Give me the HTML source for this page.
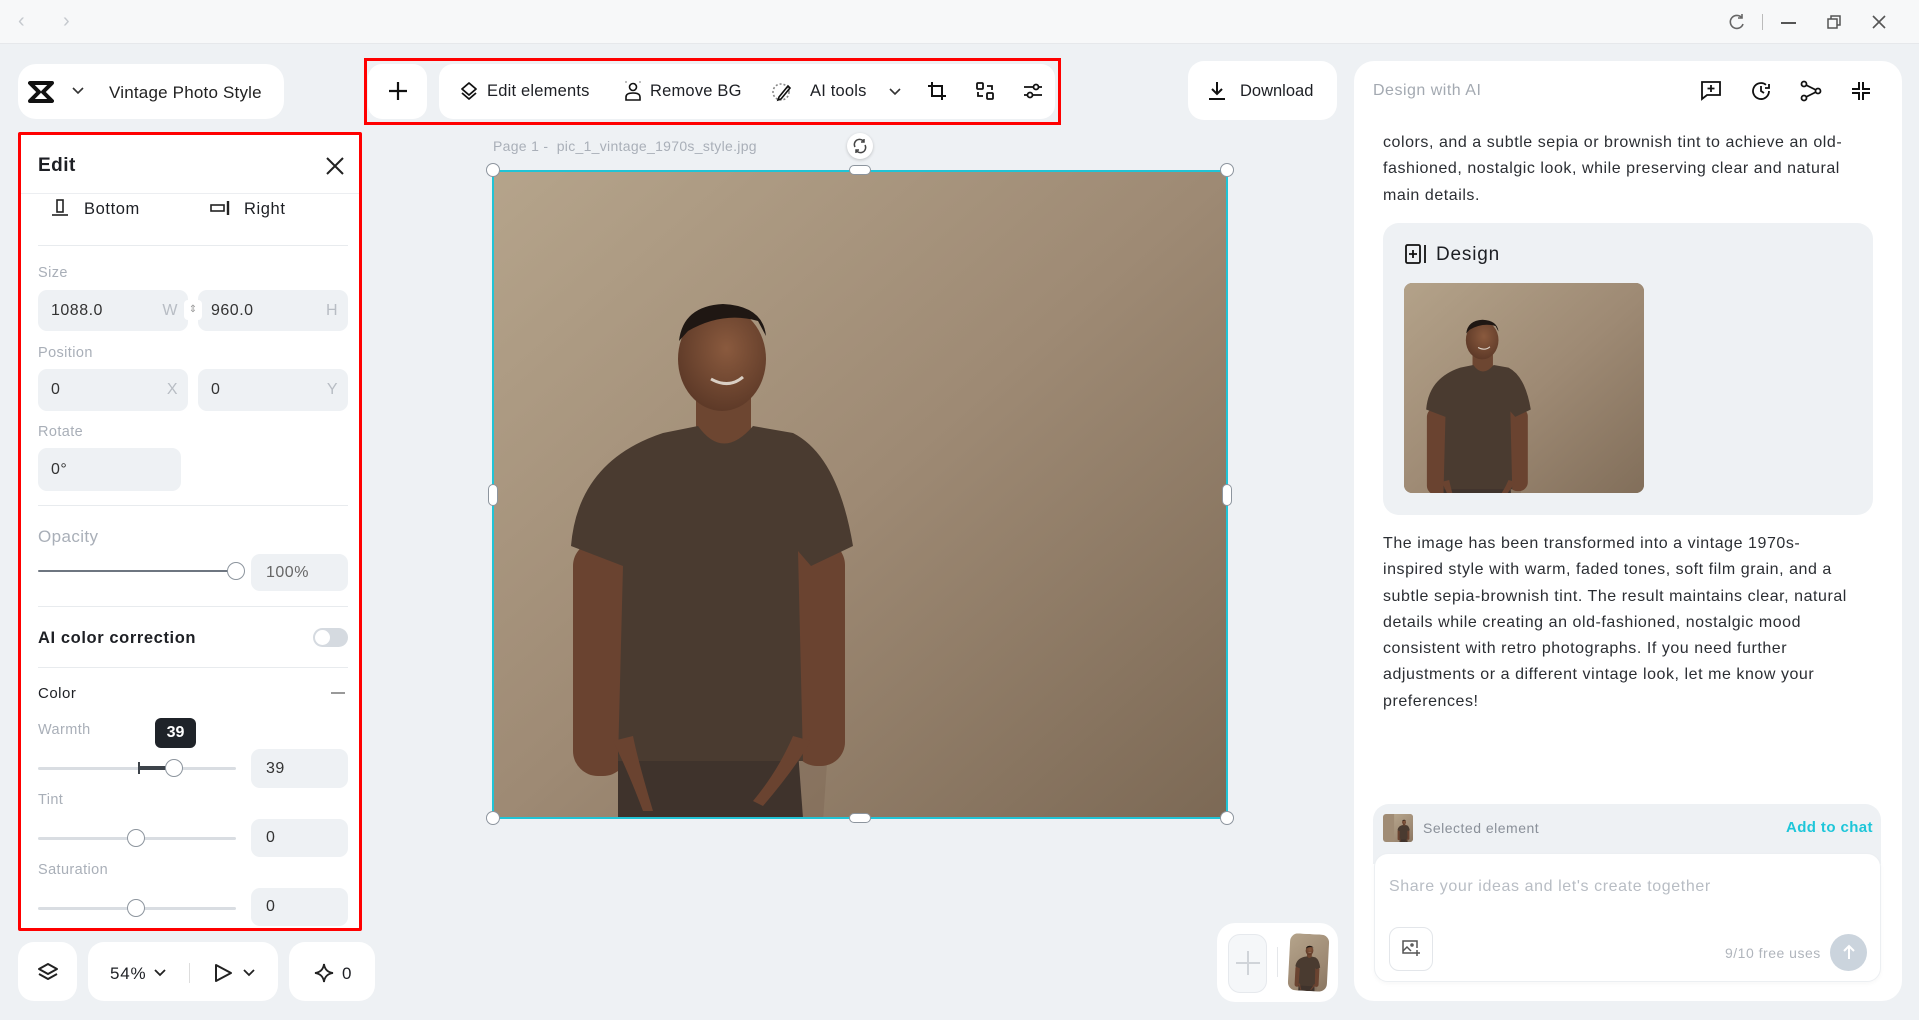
<!DOCTYPE html>
<html><head><meta charset="utf-8"><style>
*{box-sizing:border-box;margin:0;padding:0}
body{width:1919px;height:1020px;overflow:hidden;background:#eef1f4;font-family:"Liberation Sans",sans-serif;color:#1d1f24;position:relative}
.a{position:absolute}
.w{background:#fff;border-radius:18px}
.lbl{position:absolute;left:38px;font-size:14.5px;color:#a9afb8;letter-spacing:.4px}
.inp{position:absolute;background:#eef1f4;border-radius:9px;font-size:16px;color:#333;padding-left:13px;display:flex;align-items:center;letter-spacing:.5px}
.inp span{position:absolute;right:10px;color:#b8bdc4}
.div{position:absolute;left:38px;width:310px;height:1px;background:#e8ebee}
.track{position:absolute;height:3px;background:#d9dde2;border-radius:2px}
.knob{position:absolute;width:18px;height:18px;border-radius:50%;background:#fff;border:1.5px solid #8d959e}
.tb{position:absolute;top:82px;font-size:16.5px;color:#1d1f24;letter-spacing:.2px}
.p{position:absolute;left:1383px;font-size:16px;color:#2b2e33;letter-spacing:.55px;line-height:26.3px;width:500px}
.h{position:absolute;width:14px;height:14px;border-radius:50%;background:#fff;border:1.5px solid #8d959e}
.t2{margin-top:2px}
</style></head><body>
<svg width="0" height="0" style="position:absolute"><defs>
<linearGradient id="bg" x1="0" y1="0" x2="1" y2="1"><stop offset="0" stop-color="#b5a48b"/><stop offset=".5" stop-color="#9e8a74"/><stop offset="1" stop-color="#7c6955"/></linearGradient>
<radialGradient id="face" cx=".55" cy=".4" r=".6"><stop offset="0" stop-color="#8a5a3e"/><stop offset="1" stop-color="#5e3a28"/></radialGradient>
<symbol id="photo" viewBox="0 0 733 647">
<rect width="733" height="647" fill="url(#bg)"/>
<path d="M240 270 Q300 300 350 360 L330 650 L230 650Z" fill="#7a6552" opacity=".4"/>
<rect x="80" y="370" width="55" height="235" rx="25" fill="#6a4330"/>
<rect x="300" y="370" width="52" height="225" rx="24" fill="#6a4330"/>
<path d="M125 580 L305 580 L310 647 L125 647Z" fill="#3f332c"/>
<rect x="203" y="220" width="55" height="70" fill="#6d4631"/>
<ellipse cx="229" cy="188" rx="44" ry="52" fill="url(#face)"/>
<path d="M186 170 Q190 135 230 133 Q270 135 273 165 L265 150 Q230 140 195 160Z" fill="#1f1713"/>
<path d="M218 208 Q236 218 250 206" stroke="#d9cfc4" stroke-width="3" fill="none"/>
<path d="M170 262 L205 255 Q230 290 260 255 L300 262 Q345 285 360 375 L318 395 L305 380 L310 590 L125 590 L130 395 L78 375 Q85 290 170 262Z" fill="#4a3b30"/>
<path d="M120 570 Q135 600 150 640 L160 640 Q145 590 140 565Z" fill="#6a4330"/>
<path d="M300 565 Q285 600 260 630 L270 635 Q300 600 318 570Z" fill="#6a4330"/>
</symbol></defs></svg>

<!-- top bar -->
<div class="a" style="left:0;top:0;width:1919px;height:44px;background:#f7f8f9;border-bottom:1px solid #e6e8eb"></div>
<div class="a" style="left:18px;top:10px;font-size:20px;color:#c5c9ce">&#8249;</div>
<div class="a" style="left:63px;top:10px;font-size:20px;color:#c5c9ce">&#8250;</div>
<svg class="a" style="left:1728px;top:13px" width="18" height="18" viewBox="0 0 18 18" fill="none" stroke="#666" stroke-width="1.6"><path d="M14 5A6.5 6.5 0 1 0 15 11"/><path d="M14 1v4h-4"/></svg>
<div class="a" style="left:1762px;top:14px;width:1px;height:16px;background:#bbb"></div>
<div class="a" style="left:1781px;top:22px;width:15px;height:1.6px;background:#555"></div>
<svg class="a" style="left:1826px;top:14px" width="16" height="16" viewBox="0 0 16 16" fill="none" stroke="#555" stroke-width="1.5"><rect x="2" y="5" width="9" height="9"/><path d="M5 5V2h9v9h-3"/></svg>
<svg class="a" style="left:1872px;top:15px" width="14" height="14" viewBox="0 0 14 14" stroke="#555" stroke-width="1.6"><path d="M1 1l12 12M13 1L1 13"/></svg>

<!-- logo box -->
<div class="a w" style="left:18px;top:64px;width:266px;height:55px"></div>
<svg class="a" style="left:28px;top:81px" width="26" height="22" viewBox="0 0 26 22"><path d="M2 2h22L15 11l9 9H2l9-9z" fill="none" stroke="#111" stroke-width="4" stroke-linejoin="round"/></svg>
<svg class="a" style="left:72px;top:87px" width="12" height="8" viewBox="0 0 12 8" fill="none" stroke="#333" stroke-width="1.6"><path d="M1 1l5 5 5-5"/></svg>
<div class="a" style="left:109px;top:83px;font-size:17px;color:#222;letter-spacing:.2px">Vintage Photo Style</div>

<!-- edit panel -->
<div class="a" style="left:18px;top:132px;width:344px;height:799px;background:#fff;border:3px solid #f00;border-radius:2px"></div>
<div class="a" style="left:38px;top:155px;font-size:19px;font-weight:bold;letter-spacing:.5px">Edit</div>
<svg class="a" style="left:325px;top:156px" width="20" height="20" viewBox="0 0 20 20" stroke="#222" stroke-width="2"><path d="M2 2l16 16M18 2L2 18"/></svg>
<div class="a" style="left:21px;top:193px;width:338px;height:1px;background:#eceef1"></div>
<svg class="a" style="left:51px;top:199px" width="18" height="18" viewBox="0 0 18 18" fill="none" stroke="#222" stroke-width="1.6"><rect x="6" y="1" width="6" height="12"/><path d="M1 16h16"/></svg>
<div class="a" style="left:84px;top:200px;font-size:16.5px;letter-spacing:.6px">Bottom</div>
<svg class="a" style="left:210px;top:200px" width="20" height="16" viewBox="0 0 20 16" fill="none" stroke="#222" stroke-width="1.6"><rect x="1" y="5" width="13" height="6"/><path d="M18 1v14" stroke-width="2.4"/></svg>
<div class="a" style="left:244px;top:200px;font-size:16.5px;letter-spacing:.6px">Right</div>
<div class="div" style="top:245px"></div>
<div class="lbl" style="top:265px">Size</div>
<div class="inp" style="left:38px;top:290px;width:150px;height:41px">1088.0<span>W</span></div>
<div class="inp" style="left:198px;top:290px;width:150px;height:41px">960.0<span>H</span></div>
<div class="a" style="left:184px;top:300px;width:18px;height:20px;background:#fff;border-radius:4px;font-size:10px;color:#999;text-align:center;line-height:20px">&#8661;</div>
<div class="lbl" style="top:345px">Position</div>
<div class="inp" style="left:38px;top:369px;width:150px;height:42px">0<span>X</span></div>
<div class="inp" style="left:198px;top:369px;width:150px;height:42px">0<span>Y</span></div>
<div class="lbl" style="top:424px">Rotate</div>
<div class="inp" style="left:38px;top:448px;width:143px;height:43px">0°</div>
<div class="div" style="top:505px"></div>
<div class="lbl" style="top:527px;font-size:17px">Opacity</div>
<div class="track" style="left:38px;top:570px;width:198px;background:#6e7680;height:2px"></div>
<div class="knob" style="left:227px;top:562px"></div>
<div class="inp" style="left:251px;top:554px;width:97px;height:37px;padding-left:15px;color:#666">100%</div>
<div class="div" style="top:606px"></div>
<div class="a" style="left:38px;top:629px;font-size:16.5px;font-weight:bold;letter-spacing:.6px">AI color correction</div>
<div class="a" style="left:313px;top:628px;width:35px;height:19px;border-radius:10px;background:#d5dae0"></div>
<div class="a" style="left:315px;top:630px;width:15px;height:15px;border-radius:50%;background:#fff"></div>
<div class="div" style="top:667px"></div>
<div class="a" style="left:38px;top:685px;font-size:15px;letter-spacing:.5px">Color</div>
<div class="a" style="left:331px;top:692px;width:14px;height:1.5px;background:#999"></div>
<div class="lbl" style="top:722px">Warmth</div>
<div class="a" style="left:155px;top:718px;width:41px;height:30px;background:#1f2329;border-radius:6px;color:#fff;font-size:16px;font-weight:bold;text-align:center;line-height:30px">39</div>
<div class="track" style="left:38px;top:767px;width:198px"></div>
<div class="a" style="left:138px;top:766px;width:37px;height:4px;background:#3d434a"></div>
<div class="a" style="left:138px;top:762px;width:2px;height:12px;background:#3d434a"></div>
<div class="knob" style="left:165px;top:759px"></div>
<div class="inp" style="left:251px;top:749px;width:97px;height:39px;padding-left:15px">39</div>
<div class="lbl" style="top:792px">Tint</div>
<div class="track" style="left:38px;top:837px;width:198px"></div>
<div class="knob" style="left:127px;top:829px"></div>
<div class="inp" style="left:251px;top:819px;width:97px;height:38px;padding-left:15px">0</div>
<div class="lbl" style="top:862px">Saturation</div>
<div class="track" style="left:38px;top:907px;width:198px"></div>
<div class="knob" style="left:127px;top:899px"></div>
<div class="inp" style="left:251px;top:888px;width:97px;height:38px;padding-left:15px">0</div>

<!-- bottom left buttons -->
<div class="a w" style="left:18px;top:942px;width:59px;height:59px;border-radius:16px"></div>
<svg class="a" style="left:37px;top:961px" width="22" height="22" viewBox="0 0 22 22" fill="none" stroke="#222" stroke-width="2" stroke-linejoin="round"><path d="M11 3l9 5-9 5-9-5z"/><path d="M2 13l9 5 9-5"/></svg>
<div class="a w" style="left:88px;top:942px;width:190px;height:59px;border-radius:16px"></div>
<div class="a" style="left:110px;top:964px;font-size:17px;letter-spacing:.8px">54%</div>
<svg class="a" style="left:154px;top:969px" width="12" height="8" viewBox="0 0 12 8" fill="none" stroke="#222" stroke-width="1.8"><path d="M1 1l5 5 5-5"/></svg>
<div class="a" style="left:189px;top:963px;width:1px;height:20px;background:#ddd"></div>
<svg class="a" style="left:213px;top:963px" width="20" height="20" viewBox="0 0 20 20" fill="none" stroke="#222" stroke-width="2" stroke-linejoin="round"><path d="M3 2l15 8-15 8z"/></svg>
<svg class="a" style="left:243px;top:969px" width="12" height="8" viewBox="0 0 12 8" fill="none" stroke="#222" stroke-width="1.8"><path d="M1 1l5 5 5-5"/></svg>
<div class="a w" style="left:289px;top:942px;width:86px;height:59px;border-radius:16px"></div>
<svg class="a" style="left:314px;top:963px" width="20" height="20" viewBox="0 0 20 20" fill="none" stroke="#222" stroke-width="1.8"><path d="M10 1Q11 9 19 10Q11 11 10 19Q9 11 1 10Q9 9 10 1z"/></svg>
<div class="a" style="left:342px;top:964px;font-size:17px">0</div>

<!-- toolbar -->
<div class="a" style="left:364px;top:58px;width:697px;height:67px;border:3px solid #f00"></div>
<div class="a w" style="left:368px;top:64px;width:59px;height:55px;border-radius:14px"></div>
<svg class="a" style="left:388px;top:81px" width="20" height="20" viewBox="0 0 20 20" stroke="#111" stroke-width="2.2"><path d="M10 1v18M1 10h18"/></svg>
<div class="a w" style="left:439px;top:64px;width:616px;height:55px;border-radius:14px"></div>
<svg class="a" style="left:459px;top:81px" width="20" height="20" viewBox="0 0 20 20" fill="none" stroke="#111" stroke-width="1.8" stroke-linejoin="round"><path d="M10 2l7 6-7 6-7-6z"/><path d="M3 12l7 6 7-6"/></svg>
<div class="tb" style="left:487px">Edit elements</div>
<svg class="a" style="left:624px;top:81px" width="18" height="20" viewBox="0 0 18 20" fill="none" stroke="#111" stroke-width="1.6"><circle cx="9" cy="6" r="3.5"/><path d="M2 19v-3q0-4 7-4t7 4v3z"/><path d="M1 1h2M15 1h2" stroke="#aaa"/></svg>
<div class="tb" style="left:650px">Remove BG</div>
<svg class="a" style="left:771px;top:81px" width="22" height="22" viewBox="0 0 22 22" fill="none" stroke="#111" stroke-width="1.6"><circle cx="10" cy="11" r="8" stroke-dasharray="2 2" stroke="#888"/><path d="M8 16l9-11 2 2-9 11-3 1z"/></svg>
<div class="tb" style="left:810px">AI tools</div>
<svg class="a" style="left:889px;top:88px" width="12" height="8" viewBox="0 0 12 8" fill="none" stroke="#333" stroke-width="1.6"><path d="M1 1l5 5 5-5"/></svg>
<svg class="a" style="left:927px;top:81px" width="20" height="20" viewBox="0 0 20 20" fill="none" stroke="#111" stroke-width="2"><path d="M5 1v14h14M1 5h14v14"/></svg>
<svg class="a" style="left:975px;top:81px" width="20" height="20" viewBox="0 0 20 20" fill="none" stroke="#111" stroke-width="1.8"><rect x="2" y="2" width="6" height="6" rx="1"/><rect x="12" y="12" width="6" height="6" rx="1"/><path d="M12 5h5v4M8 15H3v-4"/></svg>
<svg class="a" style="left:1023px;top:81px" width="20" height="20" viewBox="0 0 20 20" fill="none" stroke="#111" stroke-width="1.8"><path d="M1 6h18M1 14h18"/><circle cx="13" cy="6" r="2.5" fill="#fff"/><circle cx="7" cy="14" r="2.5" fill="#fff"/></svg>

<!-- download -->
<div class="a w" style="left:1188px;top:61px;width:149px;height:59px;border-radius:16px"></div>
<svg class="a" style="left:1207px;top:81px" width="20" height="20" viewBox="0 0 20 20" fill="none" stroke="#111" stroke-width="2"><path d="M10 1v12M5 8l5 5 5-5M2 18h16"/></svg>
<div class="a" style="left:1240px;top:82px;font-size:16.5px">Download</div>

<!-- canvas -->
<div class="a" style="left:493px;top:138px;font-size:14px;color:#a9afb8;letter-spacing:.3px">Page 1 - &nbsp;pic_1_vintage_1970s_style.jpg</div>
<div class="a" style="left:847px;top:133px;width:26px;height:26px;border-radius:50%;background:#fff;box-shadow:0 1px 3px rgba(0,0,0,.2)"></div>
<svg class="a" style="left:852px;top:138px" width="16" height="16" viewBox="0 0 16 16" fill="none" stroke="#444" stroke-width="1.5"><path d="M3 9a5 5 0 0 1 9-5M13 7a5 5 0 0 1-9 5"/><path d="M12 1v3h-3M4 15v-3h3"/></svg>
<svg class="a" style="left:493px;top:171px" width="733" height="647"><use href="#photo" width="733" height="647"/></svg>
<div class="a" style="left:492px;top:170px;width:736px;height:649px;border:2px solid #20c4d6"></div>
<div class="h" style="left:486px;top:163px"></div><div class="h" style="left:1220px;top:163px"></div>
<div class="h" style="left:486px;top:811px"></div><div class="h" style="left:1220px;top:811px"></div>
<div class="a" style="left:849px;top:165px;width:22px;height:10px;border-radius:5px;background:#fff;border:1.5px solid #8d959e"></div>
<div class="a" style="left:849px;top:813px;width:22px;height:10px;border-radius:5px;background:#fff;border:1.5px solid #8d959e"></div>
<div class="a" style="left:488px;top:484px;width:10px;height:22px;border-radius:5px;background:#fff;border:1.5px solid #8d959e"></div>
<div class="a" style="left:1222px;top:484px;width:10px;height:22px;border-radius:5px;background:#fff;border:1.5px solid #8d959e"></div>

<!-- thumb box -->
<div class="a w" style="left:1217px;top:923px;width:121px;height:79px;border-radius:18px"></div>
<div class="a" style="left:1228px;top:934px;width:39px;height:59px;border-radius:12px;background:#f5f7f9;border:1px solid #e6e9ed"></div>
<svg class="a" style="left:1235px;top:950px" width="26" height="26" viewBox="0 0 26 26" stroke="#d0d4d9" stroke-width="2"><path d="M13 1v24M1 13h24"/></svg>
<div class="a" style="left:1277px;top:947px;width:1px;height:30px;background:#e5e7ea"></div>
<svg class="a" style="left:1289px;top:934px;border-radius:8px;transform:rotate(3deg)" width="39" height="57" viewBox="0 0 39 57"><use href="#photo" x="-8" y="0" width="80" height="57" preserveAspectRatio="xMinYMid slice"/></svg>

<!-- right panel -->
<div class="a w" style="left:1354px;top:61px;width:548px;height:940px;border-radius:20px"></div>
<div class="a" style="left:1373px;top:82px;font-size:16px;color:#a3a9b1;letter-spacing:.5px">Design with AI</div>
<svg class="a" style="left:1700px;top:80px" width="22" height="21" viewBox="0 0 22 21" fill="none" stroke="#111" stroke-width="1.8"><path d="M2 2h18v13H7l-5 4z"/><path d="M11 5v7M7.5 8.5h7"/></svg>
<svg class="a" style="left:1750px;top:80px" width="22" height="22" viewBox="0 0 22 22" fill="none" stroke="#111" stroke-width="1.8"><path d="M19 11a8 8 0 1 1-3-6.2"/><path d="M11 6v5l3 2"/><path d="M19 4v4h-4"/></svg>
<svg class="a" style="left:1800px;top:80px" width="22" height="22" viewBox="0 0 22 22" fill="none" stroke="#111" stroke-width="1.8"><circle cx="4" cy="4" r="2.5"/><circle cx="4" cy="18" r="2.5"/><circle cx="18" cy="11" r="2.5"/><path d="M6 5l10 5M6 17l10-5"/></svg>
<svg class="a" style="left:1851px;top:81px" width="20" height="20" viewBox="0 0 20 20" fill="none" stroke="#111" stroke-width="2"><path d="M8 1v7H1M12 1v7h7M8 19v-7H1M12 19v-7h7"/></svg>
<div class="p" style="top:130px">colors, and a subtle sepia or brownish tint to achieve an old-<br>fashioned, nostalgic look, while preserving clear and natural<br>main details.</div>
<div class="a" style="left:1383px;top:223px;width:490px;height:292px;background:#eef1f4;border-radius:16px"></div>
<svg class="a" style="left:1405px;top:244px" width="22" height="20" viewBox="0 0 22 20" fill="none" stroke="#111" stroke-width="1.8"><rect x="1" y="1" width="14" height="18" rx="1.5"/><path d="M8 6v8M4 10h8M20 1v18"/></svg>
<div class="a" style="left:1436px;top:244px;font-size:19px;letter-spacing:.8px">Design</div>
<svg class="a" style="left:1404px;top:283px;border-radius:8px" width="240" height="210" viewBox="0 0 240 210"><rect width="240" height="210" fill="#9a8670"/><use href="#photo" x="-10" y="0" width="400" height="360" preserveAspectRatio="xMinYMin meet" transform="translate(0,-15) scale(0.68)"/></svg>
<div class="p" style="top:531px;width:490px">The image has been transformed into a vintage 1970s-<br>inspired style with warm, faded tones, soft film grain, and a<br>subtle sepia-brownish tint. The result maintains clear, natural<br>details while creating an old-fashioned, nostalgic mood<br>consistent with retro photographs. If you need further<br>adjustments or a different vintage look, let me know your<br>preferences!</div>
<div class="a" style="left:1373px;top:804px;width:508px;height:60px;background:#eef1f4;border-radius:16px 16px 0 0"></div>
<svg class="a" style="left:1383px;top:814px;border-radius:3px" width="30" height="28" viewBox="0 0 30 28"><rect width="30" height="28" fill="#a08c75"/><use href="#photo" width="60" height="28" x="-3"/></svg>
<div class="a" style="left:1423px;top:820px;font-size:14px;color:#8a9099;letter-spacing:.5px">Selected element</div>
<div class="a" style="left:1786px;top:819px;font-size:15px;font-weight:bold;color:#1ec6d9;letter-spacing:.4px">Add to chat</div>
<div class="a" style="left:1374px;top:853px;width:507px;height:129px;background:#fff;border:1px solid #eceff2;border-radius:14px;box-shadow:0 2px 4px rgba(0,0,0,.03)"></div>
<div class="a" style="left:1389px;top:878px;font-size:16px;color:#b8bdc4;letter-spacing:.6px">Share your ideas and let's create together</div>
<div class="a" style="left:1389px;top:927px;width:44px;height:44px;border:1px solid #e3e6ea;border-radius:10px"></div>
<svg class="a" style="left:1402px;top:940px" width="19" height="17" viewBox="0 0 19 17" fill="none" stroke="#555" stroke-width="1.5"><path d="M12 13H1V1h14v7"/><path d="M1 11l4-4 4 4"/><circle cx="10" cy="5" r="1"/><path d="M15 10v6M12 13h6"/></svg>
<div class="a" style="left:1725px;top:945px;font-size:14px;color:#b0b5bc;letter-spacing:.5px">9/10 free uses</div>
<div class="a" style="left:1830px;top:934px;width:37px;height:37px;border-radius:50%;background:#cbd4dd"></div>
<svg class="a" style="left:1841px;top:944px" width="16" height="16" viewBox="0 0 16 16" fill="none" stroke="#fff" stroke-width="2"><path d="M8 15V2M3 7l5-5 5 5"/></svg>
</body></html>
